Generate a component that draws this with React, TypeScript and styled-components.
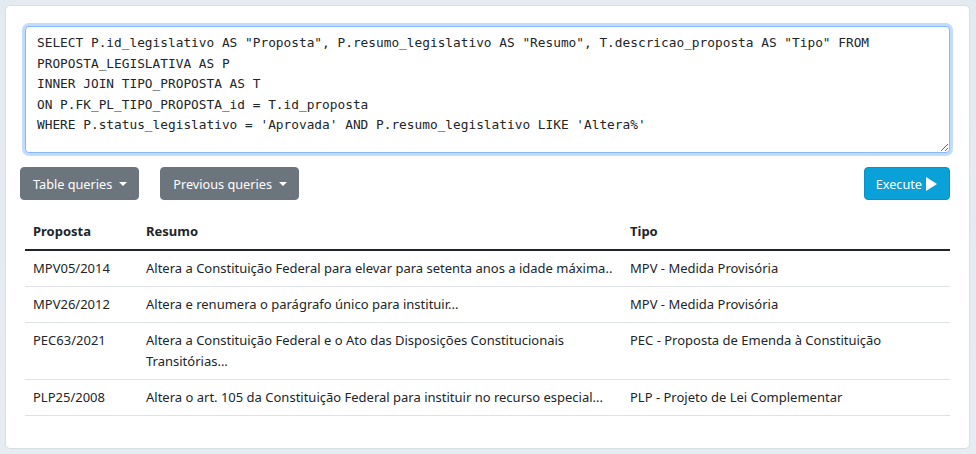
import React from "react";
import styled, { createGlobalStyle } from "styled-components";

const Global = createGlobalStyle`
  html, body { margin: 0; padding: 0; }
  body {
    background: linear-gradient(180deg, #e3eaf0 0%, #e6ecf2 100%);
    font-family: "Noto Sans", "Open Sans", sans-serif;
    color: #212529;
    width: 976px;
    height: 454px;
    overflow: hidden;
  }
`;

const Page = styled.div`
  padding: 5px 6px 5px 5px;
  box-sizing: border-box;
  height: 454px;
`;

const Card = styled.div`
  background: #fff;
  border: 1px solid #d6dee6;
  border-radius: 5px;
  box-sizing: border-box;
  height: 444px;
  padding: 20px 19px 0 14px;
`;

const Editor = styled.textarea`
  display: block;
  box-sizing: border-box;
  margin-left: 5px;
  width: calc(100% - 5px);
  height: 127px;
  padding: 6px 11px;
  font-family: "DejaVu Sans Mono", "Liberation Mono", monospace;
  font-size: 12.8px;
  line-height: 20.6px;
  color: #212529;
  border: 1px solid #86b7fe;
  border-radius: 4px;
  box-shadow: 0 0 0 3px rgba(13, 110, 253, 0.25);
  outline: none;
  resize: vertical;
  white-space: pre-wrap;
`;

const Toolbar = styled.div`
  display: flex;
  align-items: center;
  margin-top: 14px;
`;

const Button = styled.button<{ $variant?: "secondary" | "info" }>`
  display: inline-flex;
  align-items: center;
  height: 33px;
  padding: 0 11px 0 12px;
  border-radius: 4px;
  border: 1px solid ${(p) => (p.$variant === "info" ? "#0891c6" : "#6c757d")};
  background: ${(p) => (p.$variant === "info" ? "#0aa0d8" : "#6c757d")};
  color: #fff;
  font-family: "Noto Sans", "Open Sans", sans-serif;
  font-size: 12.7px;
  cursor: pointer;
  & + & { margin-left: 21px; }
`;

const Caret = styled.span`
  display: inline-block;
  margin-left: 7px;
  margin-top: 1px;
  border-top: 4.5px solid #fff;
  border-left: 4px solid transparent;
  border-right: 4px solid transparent;
`;

const Spacer = styled.div`
  flex: 1;
`;

const ExecButton = styled(Button)`
  gap: 3px;
  padding: 0 11px 0 11px;
`;

const Table = styled.table`
  margin: 14px 0 0 5px;
  width: calc(100% - 5px);
  border-collapse: collapse;
  font-size: 13px;
  line-height: 21px;
  table-layout: fixed;
`;

const Th = styled.th<{ $w?: number }>`
  text-align: left;
  font-weight: 700;
  padding: 7px 8px;
  border-bottom: 2px solid #212529;
  width: ${(p) => (p.$w ? `${p.$w}px` : "auto")};
`;

const Td = styled.td`
  padding: 7px 8px;
  vertical-align: top;
  border-bottom: 1px solid #dee2e6;
`;

const rows = [
  ["MPV05/2014", "Altera a Constituição Federal para elevar para setenta anos a idade máxima..", "MPV - Medida Provisória"],
  ["MPV26/2012", "Altera e renumera o parágrafo único para instituir...", "MPV - Medida Provisória"],
  ["PEC63/2021", "Altera a Constituição Federal e o Ato das Disposições Constitucionais Transitórias...", "PEC - Proposta de Emenda à Constituição"],
  ["PLP25/2008", "Altera o art. 105 da Constituição Federal para instituir no recurso especial...", "PLP - Projeto de Lei Complementar"],
];

const sql = `SELECT P.id_legislativo AS "Proposta", P.resumo_legislativo AS "Resumo", T.descricao_proposta AS "Tipo" FROM
PROPOSTA_LEGISLATIVA AS P
INNER JOIN TIPO_PROPOSTA AS T
ON P.FK_PL_TIPO_PROPOSTA_id = T.id_proposta
WHERE P.status_legislativo = 'Aprovada' AND P.resumo_legislativo LIKE 'Altera%'`;

export default function App() {
  return (
    <>
      <Global />
      <Page>
        <Card>
          <Editor defaultValue={sql} spellCheck={false} />
          <Toolbar>
            <Button $variant="secondary">
              Table queries <Caret />
            </Button>
            <Button $variant="secondary">
              Previous queries <Caret />
            </Button>
            <Spacer />
            <ExecButton $variant="info">
              Execute
              <svg width="13" height="16" viewBox="0 0 13 16">
                <path d="M1 1 L12 8 L1 15 Z" fill="#fff" />
              </svg>
            </ExecButton>
          </Toolbar>
          <Table>
            <thead>
              <tr>
                <Th $w={97}>Proposta</Th>
                <Th $w={468}>Resumo</Th>
                <Th>Tipo</Th>
              </tr>
            </thead>
            <tbody>
              {rows.map((r) => (
                <tr key={r[0]}>
                  <Td>{r[0]}</Td>
                  <Td>{r[1]}</Td>
                  <Td>{r[2]}</Td>
                </tr>
              ))}
            </tbody>
          </Table>
        </Card>
      </Page>
    </>
  );
}
